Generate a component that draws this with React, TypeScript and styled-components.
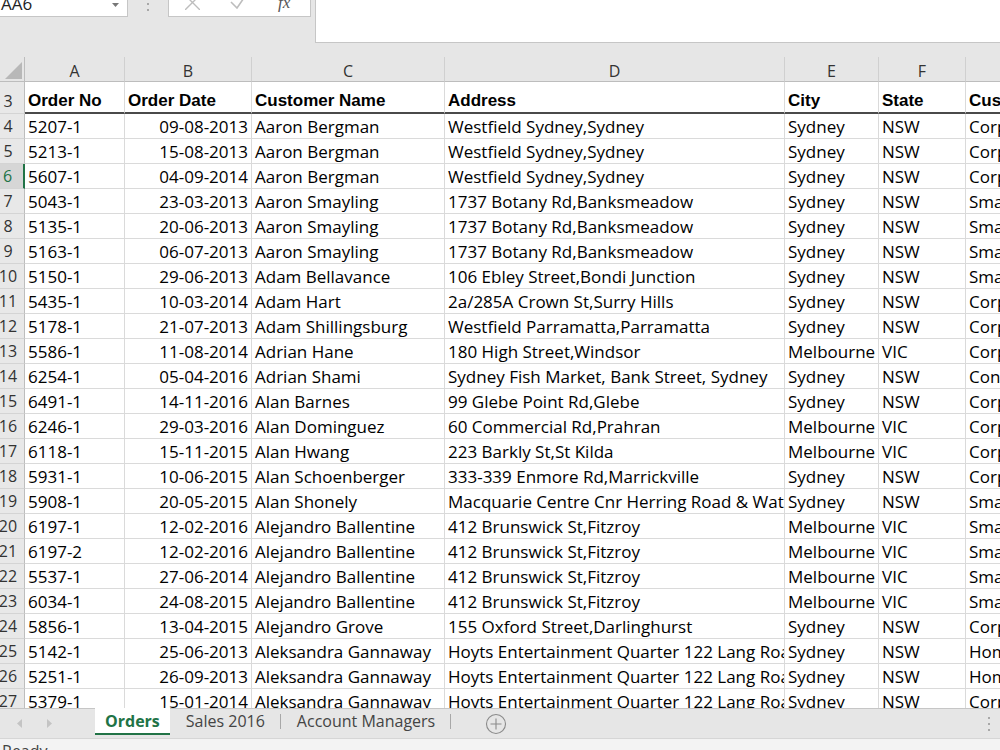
import React from "react";
import styled, { createGlobalStyle } from "styled-components";

const COLS = "25px 100px 127px 193px 340px 94px 87px 240px";
const UI_FONT = `"Open Sans", "Noto Sans", sans-serif`;

const GlobalStyle = createGlobalStyle`
  html, body {
    margin: 0;
    padding: 0;
    overflow: hidden;
    background: #e6e6e6;
  }
`;

const Window = styled.div`
  width: 1000px;
  height: 750px;
  display: flex;
  flex-direction: column;
  background: #e6e6e6;
  overflow: hidden;
  font-family: ${UI_FONT};
`;

/* formula bar */

const FormulaArea = styled.div`
  height: 57px;
  flex: none;
  display: flex;
  align-items: flex-start;
`;

const NameBox = styled.div`
  width: 128px;
  height: 17px;
  box-sizing: border-box;
  background: #fff;
  border-right: 1px solid #c6c6c6;
  border-bottom: 1px solid #c6c6c6;
  display: flex;
  align-items: flex-start;
  justify-content: space-between;
  padding: 0 8px 0 1px;
  overflow: hidden;
`;

const ClippedText = styled.span`
  font-size: 17px;
  line-height: 7px;
  color: #222;
`;

const Dots = styled.div`
  width: 40px;
  height: 17px;
  display: flex;
  flex-direction: column;
  align-items: center;
  gap: 4px;
  padding-top: 3px;
  box-sizing: border-box;

  span {
    width: 2px;
    height: 2px;
    background: #a8a8a8;
  }
`;

const FxBox = styled.div`
  width: 143px;
  height: 17px;
  box-sizing: border-box;
  background: #fff;
  border: 1px solid #c6c6c6;
  border-top: none;
  display: flex;
  align-items: flex-start;
  padding-left: 16px;
  overflow: hidden;
`;

const Fx = styled.span`
  font-family: "Liberation Serif", serif;
  font-style: italic;
  font-size: 17px;
  line-height: 6px;
  color: #555;
  margin-left: 29px;
`;

const FormulaInput = styled.div`
  flex: 1;
  height: 43px;
  margin-left: 4px;
  box-sizing: border-box;
  background: #fff;
  border-left: 1px solid #c6c6c6;
  border-bottom: 1px solid #c6c6c6;
`;

/* sheet */

const Sheet = styled.div`
  flex: 1;
  overflow: hidden;
  background: #fff;
`;

const Row = styled.div<{ $h: number }>`
  display: grid;
  grid-template-columns: ${COLS};
  height: ${(p) => p.$h}px;
`;

const ColHead = styled.div`
  background: #e6e6e6;
  border-right: 1px solid #d0d0d0;
  border-bottom: 1px solid #bdbdbd;
  box-sizing: border-box;
  display: flex;
  align-items: center;
  justify-content: center;
  padding-top: 4px;
  font-size: 16px;
  color: #333;
  overflow: hidden;
`;

const Corner = styled(ColHead)`
  align-items: flex-end;
  justify-content: flex-start;
  padding: 0 0 2px 5px;
  border-right-color: #bdbdbd;
`;

const RowNum = styled.div<{ $active?: boolean }>`
  background: ${(p) => (p.$active ? "#d6d6d6" : "#e8e8e8")};
  border-bottom: 1px solid #d4d4d4;
  border-right: ${(p) => (p.$active ? "2px solid #217346" : "1px solid #bdbdbd")};
  box-sizing: border-box;
  display: flex;
  align-items: center;
  justify-content: center;
  padding-right: 8px;
  font-size: 16px;
  color: ${(p) => (p.$active ? "#217346" : "#333")};
  white-space: nowrap;
`;

const HeadNum = styled(RowNum)`
  padding-top: 6px;
`;

const Cell = styled.div<{ $right?: boolean }>`
  border-right: 1px solid #dadada;
  border-bottom: 1px solid #dadada;
  box-sizing: border-box;
  display: flex;
  align-items: center;
  justify-content: ${(p) => (p.$right ? "flex-end" : "flex-start")};
  padding: 0 3px;
  font-size: 17px;
  color: #000;
  white-space: nowrap;
  overflow: hidden;
`;

const HeadCell = styled(Cell)`
  font-family: "Liberation Sans", Arial, sans-serif;
  font-weight: bold;
  font-size: 17px;
  border-bottom: 2px solid #4a4a4a;
  padding-top: 8px;
`;

/* sheet tabs */

const TabBar = styled.div`
  height: 30px;
  flex: none;
  display: flex;
  align-items: stretch;
  background: #e6e6e6;
  border-top: 1px solid #c6c6c6;
  box-sizing: border-box;
`;

const Nav = styled.div`
  width: 95px;
  display: flex;
  align-items: center;
  padding-left: 17px;
  gap: 23px;
  box-sizing: border-box;
`;

const Tab = styled.div<{ $active?: boolean; $sep?: boolean }>`
  position: relative;
  display: flex;
  align-items: center;
  padding: 0 ${(p) => (p.$active ? 10 : 16)}px 0;
  font-size: 16px;
  font-weight: ${(p) => (p.$active ? 700 : 400)};
  color: ${(p) => (p.$active ? "#217346" : "#444")};
  background: ${(p) => (p.$active ? "#fff" : "transparent")};
  border-bottom: ${(p) => (p.$active ? "2px solid #217346" : "2px solid transparent")};
  margin-bottom: 3px;
  margin-top: -1px;

  &::after {
    content: "";
    display: ${(p) => (p.$sep ? "block" : "none")};
    position: absolute;
    right: 0;
    top: 6px;
    bottom: 4px;
    width: 1px;
    background: #a8a8a8;
  }
`;

const AddSheet = styled.div`
  margin-left: 34px;
  display: flex;
  align-items: center;
`;

const MoreDots = styled.div`
  margin-left: auto;
  width: 22px;
  display: flex;
  flex-direction: column;
  align-items: center;
  justify-content: center;
  gap: 4px;

  span {
    width: 2px;
    height: 2px;
    background: #a8a8a8;
  }
`;

const StatusBar = styled.div`
  height: 12px;
  flex: none;
  background: #f3f3f3;
  border-top: 1px solid #d6d6d6;
  box-sizing: border-box;
  padding: 2px 0 0 2px;
  font-size: 16px;
  line-height: 20px;
  color: #444;
  overflow: hidden;
`;

type Order = [string, string, string, string, string, string, string];

const HOYTS = "Hoyts Entertainment Quarter 122 Lang Road,Moore Park";
const FITZROY = "412 Brunswick St,Fitzroy";

const orders: Order[] = [
  ["5207-1", "09-08-2013", "Aaron Bergman", "Westfield Sydney,Sydney", "Sydney", "NSW", "Corporate"],
  ["5213-1", "15-08-2013", "Aaron Bergman", "Westfield Sydney,Sydney", "Sydney", "NSW", "Corporate"],
  ["5607-1", "04-09-2014", "Aaron Bergman", "Westfield Sydney,Sydney", "Sydney", "NSW", "Corporate"],
  ["5043-1", "23-03-2013", "Aaron Smayling", "1737 Botany Rd,Banksmeadow", "Sydney", "NSW", "Small Business"],
  ["5135-1", "20-06-2013", "Aaron Smayling", "1737 Botany Rd,Banksmeadow", "Sydney", "NSW", "Small Business"],
  ["5163-1", "06-07-2013", "Aaron Smayling", "1737 Botany Rd,Banksmeadow", "Sydney", "NSW", "Small Business"],
  ["5150-1", "29-06-2013", "Adam Bellavance", "106 Ebley Street,Bondi Junction", "Sydney", "NSW", "Small Business"],
  ["5435-1", "10-03-2014", "Adam Hart", "2a/285A Crown St,Surry Hills", "Sydney", "NSW", "Corporate"],
  ["5178-1", "21-07-2013", "Adam Shillingsburg", "Westfield Parramatta,Parramatta", "Sydney", "NSW", "Corporate"],
  ["5586-1", "11-08-2014", "Adrian Hane", "180 High Street,Windsor", "Melbourne", "VIC", "Corporate"],
  ["6254-1", "05-04-2016", "Adrian Shami", "Sydney Fish Market, Bank Street, Sydney", "Sydney", "NSW", "Consumer"],
  ["6491-1", "14-11-2016", "Alan Barnes", "99 Glebe Point Rd,Glebe", "Sydney", "NSW", "Corporate"],
  ["6246-1", "29-03-2016", "Alan Dominguez", "60 Commercial Rd,Prahran", "Melbourne", "VIC", "Corporate"],
  ["6118-1", "15-11-2015", "Alan Hwang", "223 Barkly St,St Kilda", "Melbourne", "VIC", "Corporate"],
  ["5931-1", "10-06-2015", "Alan Schoenberger", "333-339 Enmore Rd,Marrickville", "Sydney", "NSW", "Corporate"],
  ["5908-1", "20-05-2015", "Alan Shonely", "Macquarie Centre Cnr Herring Road & Waterloo Road", "Sydney", "NSW", "Small Business"],
  ["6197-1", "12-02-2016", "Alejandro Ballentine", FITZROY, "Melbourne", "VIC", "Small Business"],
  ["6197-2", "12-02-2016", "Alejandro Ballentine", FITZROY, "Melbourne", "VIC", "Small Business"],
  ["5537-1", "27-06-2014", "Alejandro Ballentine", FITZROY, "Melbourne", "VIC", "Small Business"],
  ["6034-1", "24-08-2015", "Alejandro Ballentine", FITZROY, "Melbourne", "VIC", "Small Business"],
  ["5856-1", "13-04-2015", "Alejandro Grove", "155 Oxford Street,Darlinghurst", "Sydney", "NSW", "Corporate"],
  ["5142-1", "25-06-2013", "Aleksandra Gannaway", HOYTS, "Sydney", "NSW", "Home Office"],
  ["5251-1", "26-09-2013", "Aleksandra Gannaway", HOYTS, "Sydney", "NSW", "Home Office"],
  ["5379-1", "15-01-2014", "Aleksandra Gannaway", HOYTS, "Sydney", "NSW", "Corporate"],
  ["5380-1", "15-01-2014", "Aleksandra Gannaway", HOYTS, "Sydney", "NSW", "Corporate"],
];

const headings = ["Order No", "Order Date", "Customer Name", "Address", "City", "State", "Customer Type"];
const letters = ["A", "B", "C", "D", "E", "F", "G"];

const ArrowIcon = ({ dir }: { dir: "left" | "right" }) => (
  <svg width="6" height="9" viewBox="0 0 6 9">
    <path d={dir === "left" ? "M5 0 L0 4.5 L5 9 Z" : "M1 0 L6 4.5 L1 9 Z"} fill="#c4c4c4" />
  </svg>
);

export default function App() {
  return (
    <Window>
      <GlobalStyle />
      <FormulaArea>
        <NameBox>
          <ClippedText>AA6</ClippedText>
          <svg width="7" height="8" viewBox="0 0 7 8">
            <path d="M0 3 L7 3 L3.5 7 Z" fill="#777" />
          </svg>
        </NameBox>
        <Dots>
          <span />
          <span />
        </Dots>
        <FxBox>
          <svg width="15" height="10" viewBox="0 5 15 10">
            <path d="M0 0 L15 15 M15 0 L0 15" stroke="#bdbdbd" strokeWidth="1.4" />
          </svg>
          <svg width="19" height="9" viewBox="0 0 19 9" style={{ marginLeft: 30 }}>
            <polyline points="1,2 7,8 18,-8" fill="none" stroke="#bdbdbd" strokeWidth="1.6" />
          </svg>
          <Fx>fx</Fx>
        </FxBox>
        <FormulaInput />
      </FormulaArea>

      <Sheet>
        <Row $h={25}>
          <Corner>
            <svg width="17" height="17" viewBox="0 0 17 17">
              <path d="M17 0 L17 17 L0 17 Z" fill="#b8b8b8" />
            </svg>
          </Corner>
          {letters.map((l) => (
            <ColHead key={l}>{l}</ColHead>
          ))}
        </Row>
        <Row $h={32}>
          <HeadNum>3</HeadNum>
          {headings.map((h) => (
            <HeadCell key={h}>{h}</HeadCell>
          ))}
        </Row>
        {orders.map((o, i) => (
          <Row $h={25} key={o[0] + i}>
            <RowNum $active={i + 4 === 6}>{i + 4}</RowNum>
            <Cell>{o[0]}</Cell>
            <Cell $right>{o[1]}</Cell>
            <Cell>{o[2]}</Cell>
            <Cell>{o[3]}</Cell>
            <Cell>{o[4]}</Cell>
            <Cell>{o[5]}</Cell>
            <Cell>{o[6]}</Cell>
          </Row>
        ))}
      </Sheet>

      <TabBar>
        <Nav>
          <ArrowIcon dir="left" />
          <ArrowIcon dir="right" />
        </Nav>
        <Tab $active>Orders</Tab>
        <Tab $sep>Sales 2016</Tab>
        <Tab $sep>Account Managers</Tab>
        <AddSheet>
          <svg width="22" height="22" viewBox="0 0 22 22">
            <circle cx="11" cy="11" r="9.5" fill="none" stroke="#8a8a8a" strokeWidth="1.1" />
            <path d="M11 5.5 V16.5 M5.5 11 H16.5" stroke="#8a8a8a" strokeWidth="1.1" />
          </svg>
        </AddSheet>
        <MoreDots>
          <span />
          <span />
          <span />
        </MoreDots>
      </TabBar>
      <StatusBar>Ready</StatusBar>
    </Window>
  );
}
